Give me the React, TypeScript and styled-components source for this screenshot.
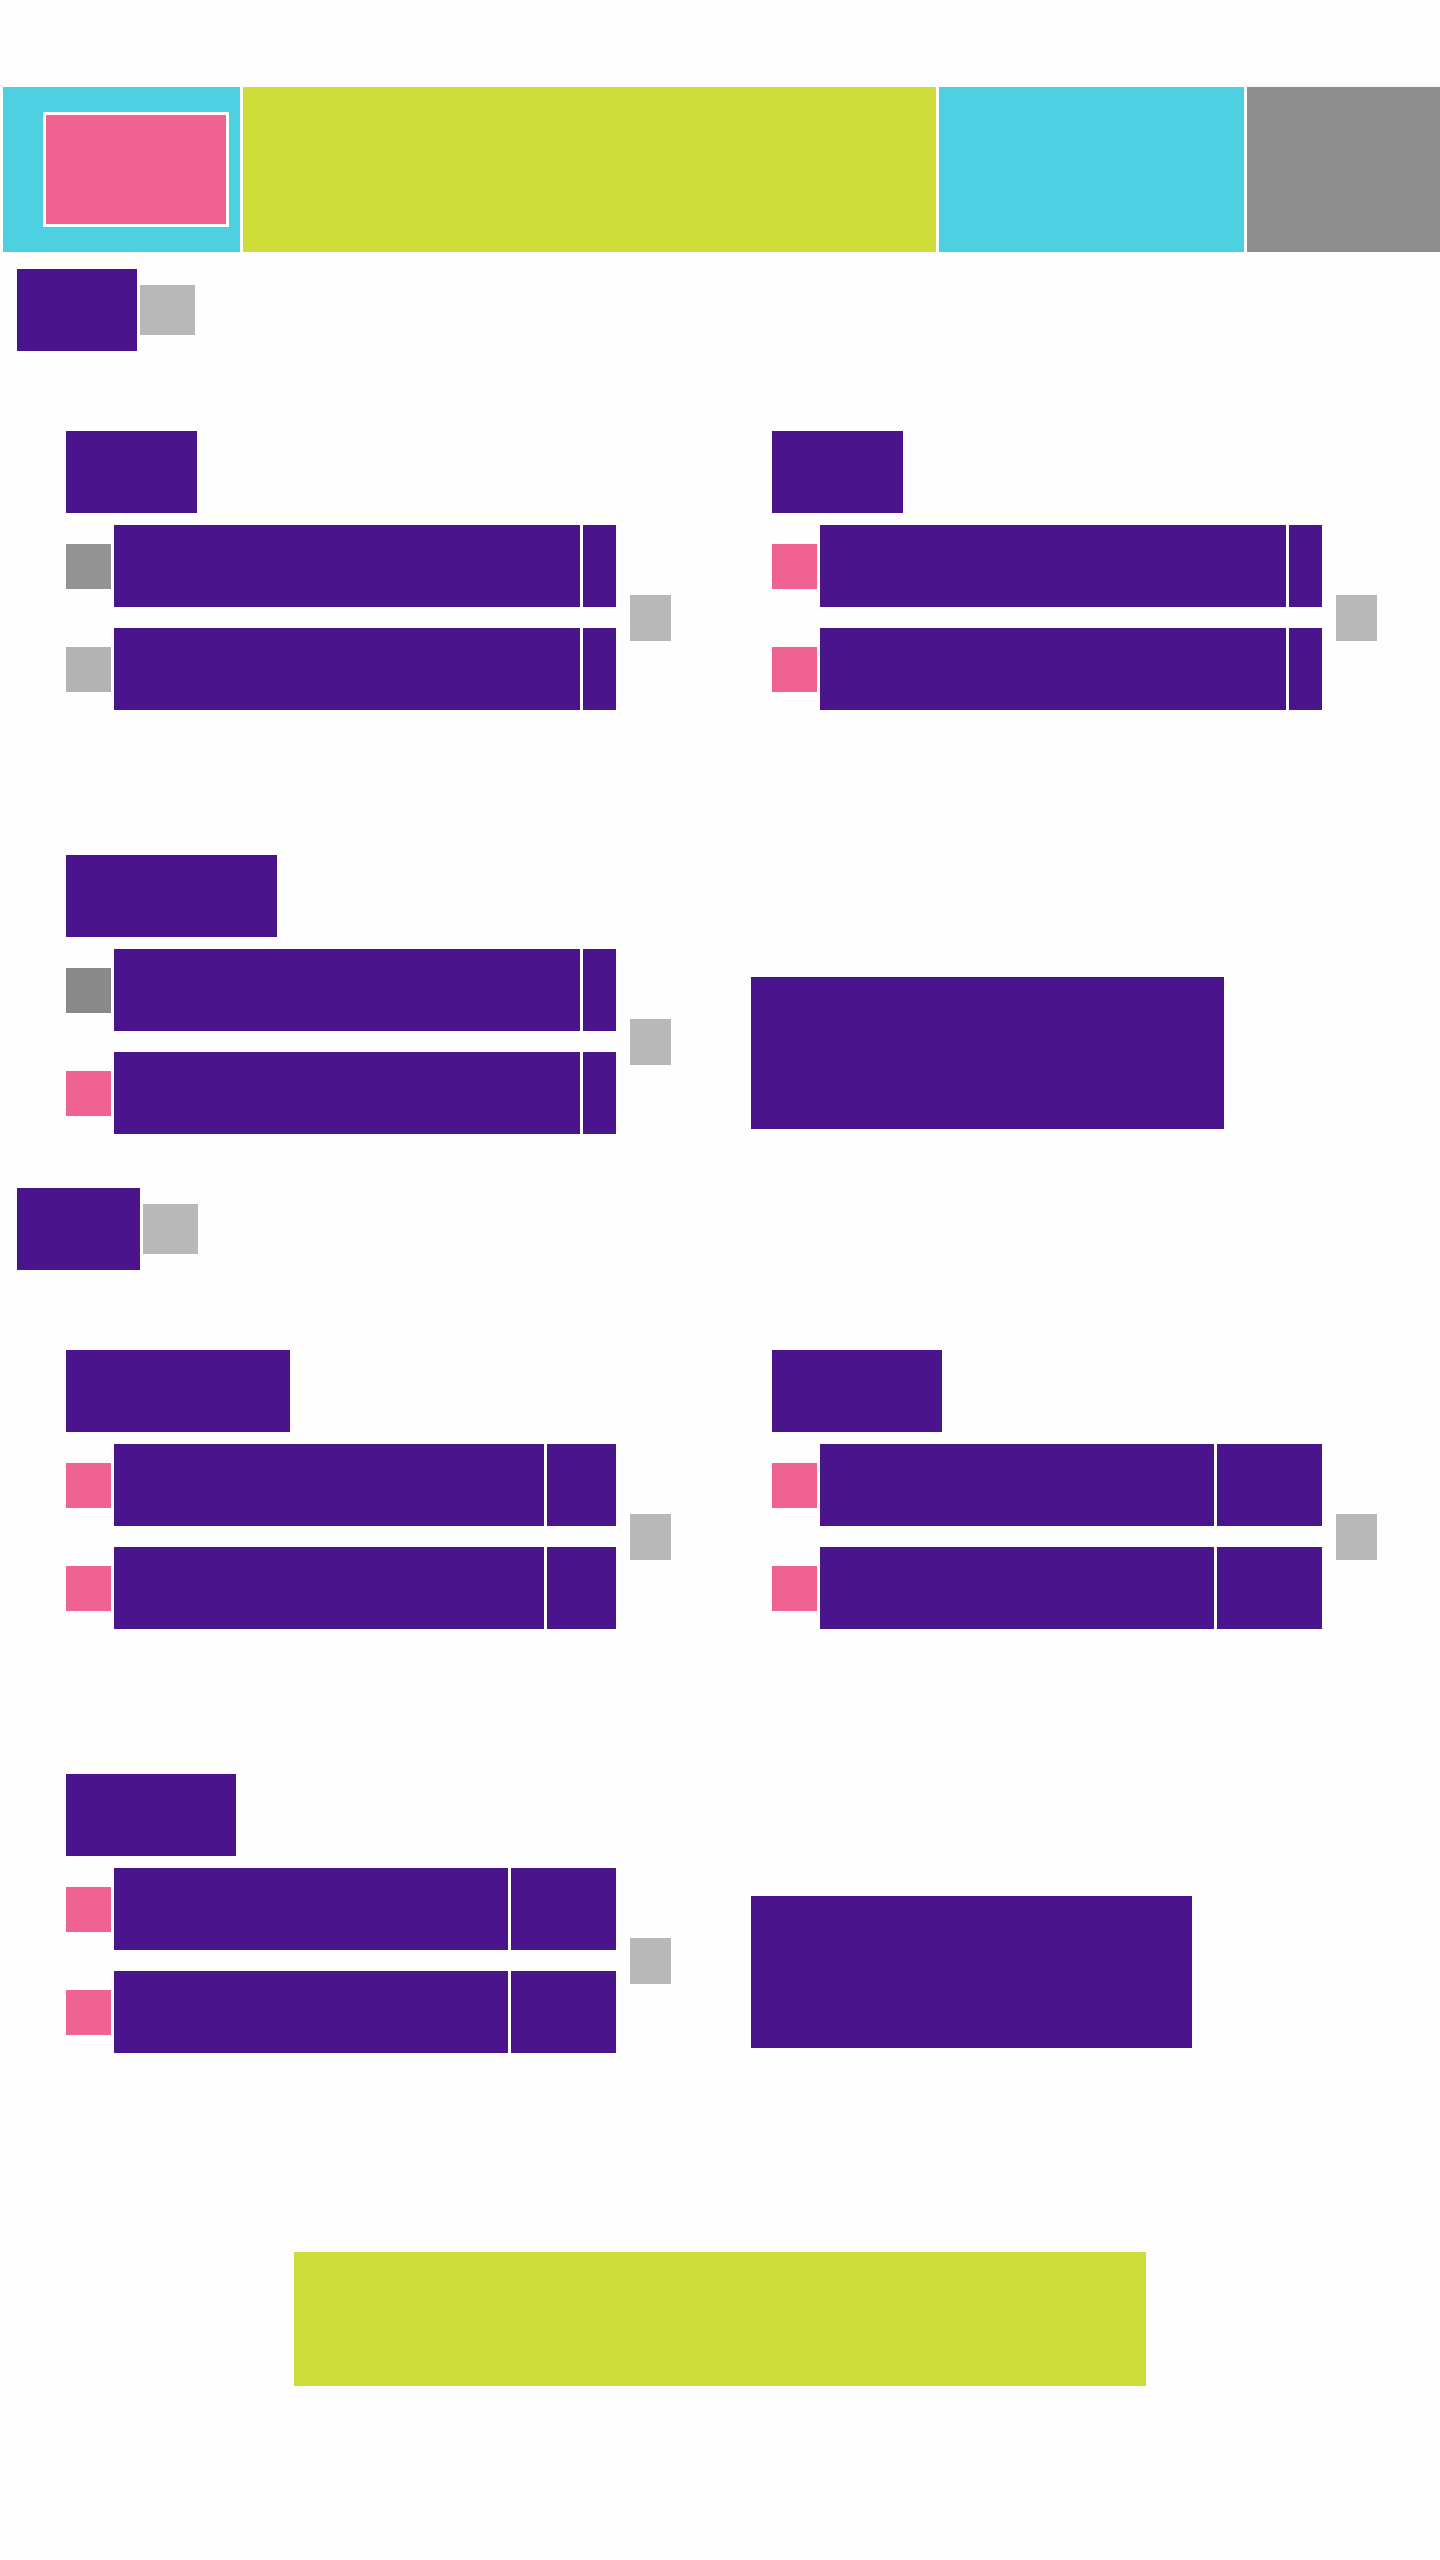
import React from "react";
import styled, { createGlobalStyle } from "styled-components";

const PURPLE = "#4a148c";
const PINK = "#f06292";
const CYAN = "#4dd0e2";
const LIME = "#cfdd3a";

const GlobalStyle = createGlobalStyle`
  body {
    margin: 0;
    background: #fefefe;
    font-family: "Liberation Sans", Arial, sans-serif;
  }
`;

const Page = styled.div`
  padding-top: 87px;
  padding-bottom: 174px;
`;

const Header = styled.header`
  display: flex;
  gap: 3px;
  height: 165px;
  padding-left: 3px;
`;

const HeaderCell = styled.div<{ $w: number | string; $bg: string }>`
  flex: ${(p) => (typeof p.$w === "number" ? `0 0 ${p.$w}px` : "1 1 auto")};
  background: ${(p) => p.$bg};
`;

const LogoCell = styled(HeaderCell)`
  padding: 25px 0 0 40px;
  box-sizing: border-box;
`;

const Logo = styled.div`
  width: 180px;
  height: 109px;
  background: ${PINK};
  border: 3px solid #fff;
`;

const SectionHeading = styled.div<{ $mt: number }>`
  display: flex;
  align-items: center;
  gap: 3px;
  margin-top: ${(p) => p.$mt}px;
  padding-left: 17px;
`;

const HeadingBlock = styled.div<{ $w: number }>`
  width: ${(p) => p.$w}px;
  height: 82px;
  background: ${PURPLE};
`;

const HeadingBadge = styled.div`
  width: 55px;
  height: 50px;
  background: #b8b8b8;
`;

const CardGrid = styled.div`
  display: grid;
  grid-template-columns: 706px 1fr;
  row-gap: 145px;
  margin-top: 80px;
  padding-left: 66px;
`;

const Card = styled.div`
  display: flex;
  flex-direction: column;
  gap: 12px;
`;

const CardTitle = styled.div<{ $w: number }>`
  width: ${(p) => p.$w}px;
  height: 82px;
  background: ${PURPLE};
`;

const CardBody = styled.div`
  display: flex;
  align-items: center;
`;

const Rows = styled.div`
  display: flex;
  flex-direction: column;
  gap: 21px;
`;

const Row = styled.div`
  display: flex;
  align-items: center;
  gap: 3px;
`;

const Swatch = styled.div<{ $c: string }>`
  width: 45px;
  height: 45px;
  background: ${(p) => p.$c};
`;

const Bar = styled.div<{ $w: number }>`
  width: ${(p) => p.$w}px;
  height: 82px;
  background: ${PURPLE};
`;

const SideBadge = styled.div`
  width: 41px;
  height: 46px;
  margin-left: 14px;
  background: #b8b8b8;
`;

const Panel = styled.div<{ $w: number }>`
  align-self: end;
  width: ${(p) => p.$w}px;
  height: 152px;
  margin: 0 0 5px -21px;
  background: ${PURPLE};
`;

const Footer = styled.div`
  width: 852px;
  height: 134px;
  margin: 199px auto 0;
  background: ${LIME};
`;

type CardData = {
  title: number;
  split: [number, number];
  swatches: [string, string];
};

const CardView: React.FC<{ card: CardData }> = ({ card }) => (
  <Card>
    <CardTitle $w={card.title} />
    <CardBody>
      <Rows>
        {card.swatches.map((c, i) => (
          <Row key={i}>
            <Swatch $c={c} />
            <Bar $w={card.split[0]} />
            <Bar $w={card.split[1]} />
          </Row>
        ))}
      </Rows>
      <SideBadge />
    </CardBody>
  </Card>
);

const narrow: [number, number] = [466, 33];
const mid: [number, number] = [430, 69];
const wide: [number, number] = [394, 105];

const sections = [
  {
    heading: 120,
    mt: 17,
    cards: [
      { title: 131, split: narrow, swatches: ["#939393", "#b3b3b3"] },
      { title: 131, split: narrow, swatches: [PINK, PINK] },
      { title: 211, split: narrow, swatches: ["#898989", PINK] },
    ] as CardData[],
    panel: 473,
  },
  {
    heading: 123,
    mt: 54,
    cards: [
      { title: 224, split: mid, swatches: [PINK, PINK] },
      { title: 170, split: wide, swatches: [PINK, PINK] },
      { title: 170, split: wide, swatches: [PINK, PINK] },
    ] as CardData[],
    panel: 441,
  },
];

export default function App() {
  return (
    <Page>
      <GlobalStyle />
      <Header>
        <LogoCell $w={237} $bg={CYAN}>
          <Logo />
        </LogoCell>
        <HeaderCell $w={693} $bg={LIME} />
        <HeaderCell $w={305} $bg={CYAN} />
        <HeaderCell $w="auto" $bg="#8e8e8e" />
      </Header>
      {sections.map((s, i) => (
        <section key={i}>
          <SectionHeading $mt={s.mt}>
            <HeadingBlock $w={s.heading} />
            <HeadingBadge />
          </SectionHeading>
          <CardGrid>
            {s.cards.map((c, j) => (
              <CardView key={j} card={c} />
            ))}
            <Panel $w={s.panel} />
          </CardGrid>
        </section>
      ))}
      <Footer />
    </Page>
  );
}
